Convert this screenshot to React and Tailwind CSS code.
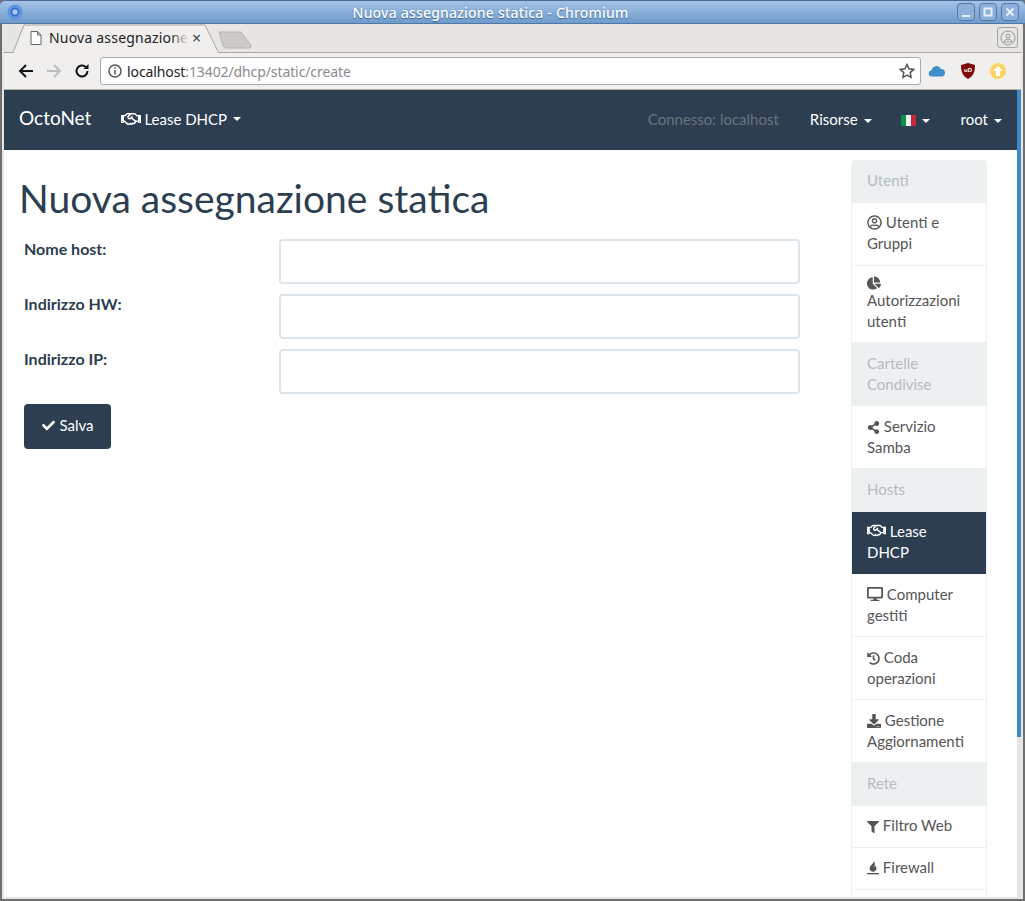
import { FaCheck, FaChartPie, FaDesktop, FaDownload, FaFilter, FaHistory, FaRegHandshake, FaRegUserCircle, FaShareAlt } from 'react-icons/fa';

const Caret = () => (
  <span className="ml-[6px] inline-block align-middle border-x-[4px] border-t-[4px] border-x-transparent border-t-current" />
);

const FlameIcon = ({ size, className }) => (
  <svg viewBox="0 0 14 16" width={size} height={size * 1.25} className={className} fill="currentColor">
    <path d="M8 0C9 3 3 5 3 9c0 2.400 1.700 4 4 4 2.600 0 4-1.800 4-4 0-1.500-.7-2.500-1.500-3.500C10 7 9 8 8.500 7.500 9.500 5 9.500 2 8 0z" />
    <rect x="0" y="14.400" width="14" height="1.600" />
  </svg>
);

const ItalyFlag = () => (
  <span className="inline-flex h-[11px] w-[15px] align-[-1px]">
    <span className="flex-1 bg-[#0c8f47]" />
    <span className="flex-1 bg-[#f4f5f0]" />
    <span className="flex-1 bg-[#c8283a]" />
  </span>
);

const sideItems = [
  { head: 'Utenti' },
  { Icon: FaRegUserCircle, size: 15, label: 'Utenti e Gruppi', tight: true },
  { Icon: FaChartPie, size: 14, label: 'Autorizzazioni utenti', stacked: true },
  { head: 'Cartelle Condivise' },
  { Icon: FaShareAlt, size: 13, label: 'Servizio Samba' },
  { head: 'Hosts' },
  { Icon: FaRegHandshake, size: 19, label: 'Lease DHCP', active: true },
  { Icon: FaDesktop, size: 16, label: 'Computer gestiti' },
  { Icon: FaHistory, size: 13, label: 'Coda operazioni' },
  { Icon: FaDownload, size: 14, label: 'Gestione Aggiornamenti' },
  { head: 'Rete' },
  { Icon: FaFilter, size: 12, label: 'Filtro Web', tight: true },
  { Icon: FlameIcon, size: 12, label: 'Firewall', tight: true },
  { label: '' },
];

const fields = ['Nome host:', 'Indirizzo HW:', 'Indirizzo IP:'];

const SideItem = ({ item }) => {
  const { head, Icon, size, label, stacked, active, tight } = item;
  if (head) {
    return <div className="min-h-[43px] border-b border-[#ecf0f1] bg-[#ecf0f1] px-[15px] py-[10px] text-[#b4bcc2]">{head}</div>;
  }
  if (active) {
    return (
      <div className="bg-[#2c3e50] pb-[11px] pl-[15px] pr-[40px] pt-[9px] text-white">
        <Icon size={size} className="inline-block align-[-3px]" /> {label}
      </div>
    );
  }
  return (
    <div className={`min-h-[42px] border-b border-[#ecf0f1] bg-white px-[15px] text-[#555555] ${tight ? 'pb-[11px] pt-[9px]' : 'py-[10px]'}`}>
      {Icon && stacked && (
        <div className="h-[14px]">
          <Icon size={size} className="block" />
        </div>
      )}
      {Icon && !stacked && (
        <>
          <Icon size={size} className="inline-block align-[-2px]" />{' '}
        </>
      )}
      {label}
    </div>
  );
};

const TitleBar = () => (
  <div className="relative flex h-[24px] shrink-0 items-center justify-center rounded-t-[5px] border-y border-t-[#4a6d97] border-b-[#4f78a8] bg-gradient-to-b from-[#a3c2e6] to-[#6f9bcb] pr-[44px]">
    <svg viewBox="0 0 16 16" className="absolute left-[7px] top-[3px] h-[16px] w-[16px]">
      <circle cx="8" cy="8" r="7.500" fill="#5f94e0" />
      <circle cx="8" cy="8" r="3.500" fill="#a9c8f0" stroke="#2f66c0" strokeWidth="1.500" />
    </svg>
    <span className="font-['Noto_Sans','Open_Sans',sans-serif] text-[14px] font-medium tracking-[0.2px] text-white [text-shadow:0_1px_1px_#3d668f]">
      Nuova assegnazione statica - Chromium
    </span>
    <div className="absolute right-[6px] top-[2px] flex gap-[4px]">
      {['M4 12h8', 'M4.500 4.500h7v7h-7z', 'M4.500 4.500l7 7m0-7l-7 7'].map(d => (
        <span key={d} className="flex h-[18px] w-[18px] items-center justify-center rounded-[4px] border border-[#4f78a8] bg-[#8db0da]">
          <svg viewBox="0 0 16 16" className="h-[16px] w-[16px]" fill="none" stroke="#e6eff9" strokeWidth="2">
            <path d={d} />
          </svg>
        </span>
      ))}
    </div>
  </div>
);

const TabStrip = () => (
  <div className="relative flex h-[29px] shrink-0 items-end border-b border-[#a9a7a3] bg-[#e8e6e3]">
    <svg viewBox="0 0 250 29" className="absolute -left-[2px] top-0 h-[29px] w-[250px]">
      <path d="M11 29L22 1h181l13.500 28z" fill="#f0efed" />
      <path d="M2 28.500h9L22 1h181l13.500 27.500" fill="none" stroke="#a9a7a3" />
      <path d="M217 8h22l10 13q1 3-2 3h-23q-2 0-3-2z" fill="#cdcbc8" stroke="#b6b4b0" />
    </svg>
    <div className="relative mb-[1px] flex h-[27px] w-[200px] items-center pl-[26px] font-['Noto_Sans','Open_Sans',sans-serif] text-[14px] tracking-[0.2px] text-[#222222]">
      <svg viewBox="0 0 12 14" className="mr-[7px] h-[14px] w-[12px] shrink-0" fill="#ffffff" stroke="#666666">
        <path d="M1 .5h6.500l3.500 3.500v9.500h-10z M7.500 .5v3.500h3.500" />
      </svg>
      <span className="relative w-[140px] whitespace-nowrap">
        Nuova assegnazione
        <span className="absolute inset-y-0 right-0 w-[18px] bg-gradient-to-r from-transparent to-[#f0efed]" />
      </span>
      <span className="ml-[3px] text-[16px] leading-none text-[#444444]">×</span>
    </div>
    <span className="absolute right-[3px] top-[3px] flex h-[21px] w-[21px] items-center justify-center rounded-[3px] border border-[#a9a7a3]">
      <svg viewBox="0 0 16 16" className="h-[16px] w-[16px]" fill="none" stroke="#9a9a9a">
        <circle cx="8" cy="8" r="7" />
        <circle cx="8" cy="6" r="2" />
        <path d="M4 12c0-2 2-2.500 4-2.500s4 .5 4 2.500z" />
      </svg>
    </span>
  </div>
);

const Toolbar = () => (
  <div className="flex h-[37px] shrink-0 items-center border-b border-[#b4b2ae] bg-[#f0efed] pl-[14px]">
    <svg viewBox="0 0 16 16" className="h-[16px] w-[16px]" fill="none" stroke="#111111" strokeWidth="2">
      <path d="M15 8H2M8 2L2 8l6 6" />
    </svg>
    <svg viewBox="0 0 16 16" className="ml-[12px] h-[16px] w-[16px]" fill="none" stroke="#bdbdbd" strokeWidth="2">
      <path d="M1 8h13M8 2l6 6-6 6" />
    </svg>
    <svg viewBox="0 0 16 16" className="ml-[12px] h-[16px] w-[16px]" fill="none" stroke="#111111" strokeWidth="2">
      <path d="M13.500 8a5.500 5.500 0 1 1-1.600-3.900" />
      <path d="M14.500 1v5h-5z" fill="#111111" stroke="none" />
    </svg>
    <div className="ml-[10px] flex h-[28px] w-[821px] shrink-0 items-center rounded-[3px] border border-[#a9a9a9] bg-white pl-[7px] pr-[5px] font-['Noto_Sans','Open_Sans',sans-serif] text-[14px] tracking-[-0.1px]">
      <svg viewBox="0 0 14 14" className="mr-[5px] h-[14px] w-[14px]" fill="none" stroke="#555555" strokeWidth="1.500">
        <circle cx="7" cy="7" r="6" />
        <path d="M7 6v4.500M7 3.200v1.500" />
      </svg>
      <span className="text-[#222222]">localhost</span>
      <span className="text-[#8b8b8b]">:13402/dhcp/static/create</span>
      <svg viewBox="0 0 16 16" className="ml-auto h-[16px] w-[16px]" fill="#ffffff" stroke="#555555" strokeWidth="1.500">
        <path d="M8 1.500l2 4.300 4.700.6-3.500 3.200.9 4.700L8 12l-4.100 2.300.9-4.700L1.300 6.400 6 5.800z" />
      </svg>
    </div>
    <svg viewBox="0 0 18 12" className="ml-[7px] h-[12px] w-[18px] shrink-0" fill="#3f8fcb">
      <path d="M4 11.500a3 3 0 0 1-.5-6 5 5 0 0 1 9.500-1.500 3.800 3.800 0 0 1 1 7.500z" />
    </svg>
    <svg viewBox="0 0 14 16" className="ml-[15px] h-[16px] w-[14px] shrink-0">
      <path d="M7 0l7 2c0 7-1.500 11-7 14C1.500 13 0 9 0 2z" fill="#7d0a0a" />
      <text x="7" y="9" textAnchor="middle" fontSize="6" fontWeight="700" fill="#ffffff" fontFamily="Liberation Sans, sans-serif">uD</text>
    </svg>
    <span className="ml-[15px] flex h-[16px] w-[16px] shrink-0 items-center justify-center rounded-full bg-[#fdd463]">
      <svg viewBox="0 0 10 10" className="h-[10px] w-[10px]" fill="#ffffff">
        <path d="M5 0l5 5H7v5H3V5H0z" />
      </svg>
    </span>
  </div>
);

const NavBar = () => (
  <nav className="flex h-[60px] shrink-0 items-center bg-[#2c3e50] pb-[2px] pl-[15px] pr-[15px] text-[15px] text-white">
    <span className="mb-[3px] text-[19px]">OctoNet</span>
    <span className="ml-[30px] flex items-center">
      <FaRegHandshake className="mr-[3px] text-[20px]" />
      Lease DHCP
      <Caret />
    </span>
    <span className="ml-auto text-[#6a747d]">Connesso: localhost</span>
    <span className="ml-[31px]">Risorse<Caret /></span>
    <span className="ml-[29px]"><ItalyFlag /><Caret /></span>
    <span className="ml-[31px]">root<Caret /></span>
  </nav>
);

const FormRow = ({ label }) => (
  <div className="mb-[10px] flex">
    <label className="-mt-px w-[255px] text-[16px] font-bold leading-[21px]">{label}</label>
    <input className="h-[45px] w-[521px] rounded-[4px] border-2 border-[#dce4ec] bg-white" />
  </div>
);

const App = () => (
  <div className="flex h-[901px] w-[1025px] flex-col overflow-hidden bg-[#6f6f6f] font-['Lato',sans-serif] text-[15px] leading-[21px] text-[#2c3e50]">
    <TitleBar />
    <div className="flex min-h-0 flex-1 flex-col border-x-2 border-b-2 border-[#6f6f6f] bg-[#e8e6e3] px-[2px] pb-[2px]">
      <TabStrip />
      <Toolbar />
      <div className="flex min-h-0 flex-1">
        <div className="flex min-w-0 flex-1 flex-col overflow-hidden bg-white">
          <NavBar />
          <div className="flex min-h-0 flex-1">
            <main className="w-[847px] pl-[15px]">
              <h1 className="mb-[19px] mt-[27px] text-[39px] font-normal leading-[43px]">Nuova assegnazione statica</h1>
              <form className="pl-[5px]">
                {fields.map(label => <FormRow key={label} label={label} />)}
                <button type="button" className="flex h-[45px] w-[87px] items-center justify-center rounded-[4px] bg-[#2c3e50] pb-[2px] pl-[1px] text-white">
                  <FaCheck className="mr-[4px] text-[13px]" />
                  Salva
                </button>
              </form>
            </main>
            <aside className="mt-[10px] w-[136px] shrink-0 overflow-hidden rounded-t-[4px] bg-[#ecf0f1] px-px">
              {sideItems.map((item, i) => <SideItem key={i} item={item} />)}
            </aside>
          </div>
        </div>
        <div className="flex w-[4px] shrink-0 flex-col bg-[#e4e4e4]">
          <div className="h-[647px] bg-[#3f88c9]" />
        </div>
      </div>
    </div>
  </div>
);

export default App;
